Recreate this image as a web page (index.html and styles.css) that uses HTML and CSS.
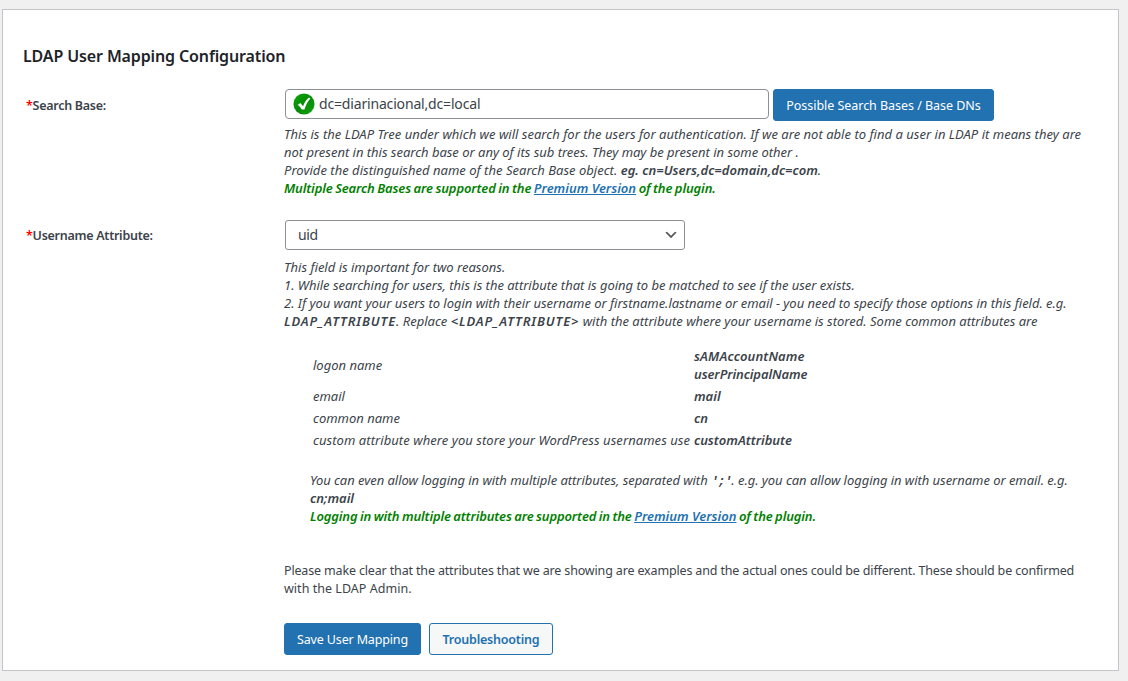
FILE: index.html
```html
<!DOCTYPE html>
<html lang="en"><head><meta charset="utf-8"><title>LDAP User Mapping Configuration</title><link rel="stylesheet" href="styles.css"></head>
<body>
<main class="panel">
<h3 class="title">LDAP User Mapping Configuration</h3>
<section class="row search">
<label class="label"><span class="req">*</span>Search Base:</label>
<div class="content">
<div class="controls">
<div class="input"><svg class="check" viewBox="0 0 24 24"><defs><linearGradient id="g" x1="0" y1="0" x2="1" y2="1"><stop offset="0" stop-color="#10a80c"/><stop offset="0.5" stop-color="#078a07"/><stop offset="1" stop-color="#12a510"/></linearGradient></defs><circle cx="12" cy="12" r="11.5" fill="url(#g)"/><path d="M5 13l3-2 3 3.500c1.500-4 3.500-7 6.500-9.500l1.500 1c-3.500 3.500-5 7.500-6.500 12h-3C8.500 16 7 14 5 13z" fill="#fff"/></svg><span>dc=diarinacional,dc=local</span></div>
<button class="btn primary bases">Possible Search Bases / Base DNs</button>
</div>
<div class="help first"><div class="intro">This is the LDAP Tree under which we will search for the users for authentication. If we are not able to find a user in LDAP it means they are</div><div class="trees">not present in this search base or any of its sub trees. They may be present in some other .</div><div class="object">Provide the distinguished name of the Search Base object. <b>eg. cn=Users,dc=domain,dc=com</b>.</div><div class="green">Multiple Search Bases are supported in the <a>Premium Version</a> of the plugin.</div></div>
</div>
</section>
<section class="row username">
<label class="label"><span class="req">*</span>Username Attribute:</label>
<div class="content">
<div class="select"><span>uid</span><svg class="chev" viewBox="0 0 20 20"><path d="M5 6l5 5 5-5 2 1-7 7-7-7 2-1z" fill="#555"/></svg></div>
<div class="help second"><div>This field is important for two reasons.</div><div class="match">1. While searching for users, this is the attribute that is going to be matched to see if the user exists.</div><div class="login">2. If you want your users to login with their username or firstname.lastname or email - you need to specify those options in this field. e.g.</div><div><b class="caps">LDAP_ATTRIBUTE</b>. Replace <b class="caps">&lt;LDAP_ATTRIBUTE&gt;</b> with the attribute where your username is stored. Some common attributes are</div></div>
<div class="help attrs"><span>logon name</span><b><span class="account">sAMAccountName</span><br><span class="principal">userPrincipalName</span></b><span>email</span><b>mail</b><span>common name</span><b>cn</b><span class="custom">custom attribute where you store your WordPress usernames use</span><b>customAttribute</b></div>
<div class="help multi"><div class="even">You can even allow logging in with multiple attributes, separated with <b class="sep">';'</b>. e.g. you can allow logging in with username or email. e.g.</div><div><b>cn;mail</b></div><div class="green logging">Logging in with multiple attributes are supported in the <a>Premium Version</a> of the plugin.</div></div>
<div class="note"><div>Please make clear that the attributes that we are showing are examples and the actual ones could be different. These should be confirmed</div><div class="admin">with the LDAP Admin.</div></div>
<div class="actions"><button class="btn primary save">Save User Mapping</button><button class="btn outline">Troubleshooting</button></div>
</div>
</section>
</main>
</body></html>
```
FILE: styles.css
```css
* { box-sizing: border-box; }
body { margin: 0; height: 681px; padding: 9px 9px 0 2px; overflow: hidden; background: #f0f0f0; color: #3c434a; font: 13px/18px "Noto Sans", sans-serif; }
.panel { height: 662px; border: 1px solid #c3c4c7; background: #fff; padding: 37px 20px 0; }
.title { margin: 0; height: 42px; font-size: 16px; line-height: 18px; font-weight: 600; color: #1d2327; letter-spacing: -.13px; white-space: nowrap; }
.row { display: flex; }
.search { height: 131px; }
.label { width: 261px; padding: 7px 0 0 3px; font-weight: 600; flex: none; font-size: 12.5px; letter-spacing: -.27px; }
.search .label { padding-top: 8px; }
.req { color: red; }
.content { width: 815px; flex: none; }
.controls { display: flex; gap: 4px; height: 32px; padding-left: 1px; }
.input { display: flex; align-items: center; gap: 4px; width: 484px; height: 30px; padding: 0 7px; border: 1px solid #8c8f94; border-radius: 4px; color: #3c434a; font-size: 14px; letter-spacing: -.17px; }
.check { width: 22px; height: 22px; }
.btn { display: block; height: 32px; padding: 1px 0 0; border: 1px solid #2271b1; border-radius: 3px; font: 12.5px/29px "Noto Sans", sans-serif; white-space: nowrap; }
.primary { background: #2271b1; color: #fff; }
.bases { width: 221px; letter-spacing: -.04px; }
.help { font-style: italic; white-space: nowrap; }
.first { padding-top: 4px; }
.help b, .green { font-weight: 600; }
.green { color: #008000; word-spacing: -.7px; letter-spacing: -.125px; }
.green a { word-spacing: 0; letter-spacing: 0; }
.logging { letter-spacing: -.14px; }
a { color: #2271b1; text-decoration: underline; }
.intro { letter-spacing: .018px; }
.trees { letter-spacing: -.02px; }
.object { letter-spacing: .018px; }
.match { letter-spacing: -.02px; }
.login { letter-spacing: -.029px; }
.caps { letter-spacing: .88px; }
.select { display: flex; align-items: center; justify-content: space-between; width: 400px; height: 30px; margin-left: 1px; padding: 0 5px 0 12px; border: 1px solid #8c8f94; border-radius: 3px; font-size: 14px; color: #3c434a; letter-spacing: -.4px; }
.chev { width: 16px; height: 16px; }
.second { padding-top: 8px; }
.attrs { display: grid; grid-template-columns: 379px 1fr; column-gap: 2px; row-gap: 4px; align-items: center; padding: 17px 0 0 29px; }
.account { letter-spacing: .13px; }
.principal { letter-spacing: -.1px; }
.custom { letter-spacing: .06px; }
.multi { padding: 22px 0 0 26px; }
.multi div { height: 18px; }
.even { letter-spacing: -.045px; }
.sep { font-family: "Liberation Mono", monospace; line-height: 1; letter-spacing: -1px; }
.note { padding-top: 37px; font-size: 12.5px; letter-spacing: -.155px; white-space: nowrap; }
.admin { letter-spacing: .03px; }
.actions { display: flex; gap: 8px; padding-top: 25px; }
.save { width: 137px; letter-spacing: -.15px; }
.outline { width: 124px; background: #f6f7f7; color: #2271b1; font-weight: 600; letter-spacing: -.2px; }
```
